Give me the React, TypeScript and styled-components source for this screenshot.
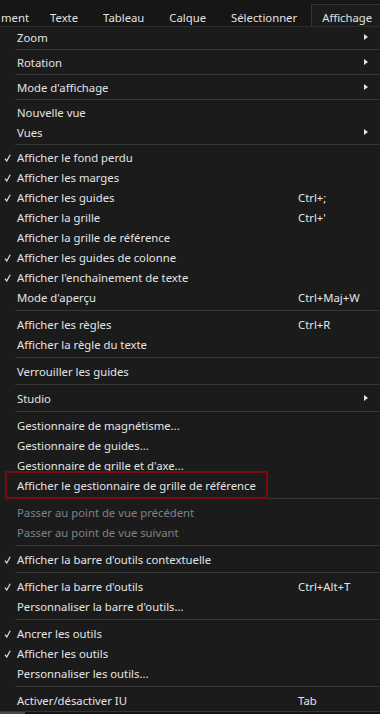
import styled, { createGlobalStyle } from 'styled-components';

type Item =
  | { kind: 'sep'; tight?: boolean }
  | {
      kind?: 'item';
      label: string;
      checked?: boolean;
      shortcut?: string;
      submenu?: boolean;
      disabled?: boolean;
      marked?: boolean;
    };

const tabs = ['ment', 'Texte', 'Tableau', 'Calque', 'Sélectionner', 'Affichage'];

const items: Item[] = [
  { label: 'Zoom', submenu: true },
  { kind: 'sep', tight: true },
  { label: 'Rotation', submenu: true },
  { kind: 'sep', tight: true },
  { label: "Mode d'affichage", submenu: true },
  { kind: 'sep', tight: true },
  { label: 'Nouvelle vue' },
  { label: 'Vues', submenu: true },
  { kind: 'sep', tight: true },
  { label: 'Afficher le fond perdu', checked: true },
  { label: 'Afficher les marges', checked: true },
  { label: 'Afficher les guides', checked: true, shortcut: 'Ctrl+;' },
  { label: 'Afficher la grille', shortcut: "Ctrl+'" },
  { label: 'Afficher la grille de référence' },
  { label: 'Afficher les guides de colonne', checked: true },
  { label: "Afficher l'enchaînement de texte", checked: true },
  { label: "Mode d'aperçu", shortcut: 'Ctrl+Maj+W' },
  { kind: 'sep' },
  { label: 'Afficher les règles', shortcut: 'Ctrl+R' },
  { label: 'Afficher la règle du texte' },
  { kind: 'sep' },
  { label: 'Verrouiller les guides' },
  { kind: 'sep' },
  { label: 'Studio', submenu: true },
  { kind: 'sep' },
  { label: 'Gestionnaire de magnétisme...' },
  { label: 'Gestionnaire de guides...' },
  { label: "Gestionnaire de grille et d'axe..." },
  { label: 'Afficher le gestionnaire de grille de référence', marked: true },
  { kind: 'sep' },
  { label: 'Passer au point de vue précédent', disabled: true },
  { label: 'Passer au point de vue suivant', disabled: true },
  { kind: 'sep' },
  { label: "Afficher la barre d'outils contextuelle", checked: true },
  { kind: 'sep' },
  { label: "Afficher la barre d'outils", checked: true, shortcut: 'Ctrl+Alt+T' },
  { label: "Personnaliser la barre d'outils..." },
  { kind: 'sep' },
  { label: 'Ancrer les outils', checked: true },
  { label: 'Afficher les outils', checked: true },
  { label: 'Personnaliser les outils...' },
  { kind: 'sep' },
  { label: 'Activer/désactiver IU', shortcut: 'Tab' },
];

export default function App() {
  return (
    <>
      <GlobalStyle />
      <Window>
        <TabBar>
          {tabs.map((t, i) => (
            <Tab key={t} active={t === 'Affichage'} first={i === 0}>
              {t}
            </Tab>
          ))}
        </TabBar>
        <Menu>
          {items.map((it, i) =>
            it.kind === 'sep' ? (
              <Separator key={i} tight={it.tight} />
            ) : (
              <Row key={i} disabled={it.disabled} marked={it.marked}>
                <Check>
                  {it.checked && (
                    <svg width="7" height="8" viewBox="0 0 7 8">
                      <path d="M1 4.6 L2.8 7 L6.2 0.8" fill="none" stroke="#d4d4d4" strokeWidth="1.3" />
                    </svg>
                  )}
                </Check>
                <Label>{it.label}</Label>
                <Shortcut>{it.shortcut}</Shortcut>
                <Arrow>{it.submenu && <Triangle />}</Arrow>
              </Row>
            ),
          )}
        </Menu>
        <Footer>
          <FooterTab />
        </Footer>
      </Window>
    </>
  );
}

const GlobalStyle = createGlobalStyle`
  html, body {
    margin: 0;
    padding: 0;
    background: #1c1b1c;
  }
  body {
    font-family: 'Noto Sans', 'Open Sans', sans-serif;
  }
`;

const Window = styled.div`
  width: 380px;
  height: 714px;
  display: flex;
  flex-direction: column;
  overflow: hidden;
  background: #1c1b1c;
`;

const TabBar = styled.div`
  height: 27px;
  flex-shrink: 0;
  display: flex;
  align-items: flex-end;
  background: #161616;
  border-bottom: 1px solid #2c2c2c;
  box-sizing: border-box;
  overflow: hidden;
`;

const Tab = styled.div<{ active?: boolean; first?: boolean }>`
  display: flex;
  align-items: center;
  padding: 3px 12px 0;
  padding-left: ${p => (p.first ? '0' : p.active ? '10px' : '12px')};
  padding-right: ${p => (p.active ? '0' : p.first ? '8px' : '12px')};
  margin-left: ${p => (p.active ? '2px' : '0')};
  flex: ${p => (p.active ? '1' : 'none')};
  box-sizing: border-box;
  font-size: 11.3px;
  color: #e2e2e2;
  white-space: nowrap;
  background: ${p => (p.active ? '#1d1c1d' : 'transparent')};
  border: 1px solid ${p => (p.active ? '#353535' : 'transparent')};
  border-right: none;
  border-bottom: none;
  margin-bottom: ${p => (p.active ? '-1px' : '0')};
  height: ${p => (p.active ? '23px' : '22px')};
`;

const Menu = styled.div`
  display: flex;
  flex-direction: column;
`;

const Row = styled.div<{ disabled?: boolean; marked?: boolean }>`
  position: relative;
  height: 20px;
  display: grid;
  grid-template-columns: 17px 1fr 66px 16px;
  align-items: center;
  font-size: 11.3px;
  color: ${p => (p.disabled ? '#818181' : '#e4e4e4')};
  white-space: nowrap;

  ${p =>
    p.marked &&
    `
    &::after {
      content: '';
      position: absolute;
      left: 5px;
      width: 263px;
      top: -4px;
      bottom: -4px;
      border: 2px solid #780c0c;
      box-sizing: border-box;
    }
  `}
`;

const Check = styled.span`
  display: flex;
  justify-content: flex-end;
  padding-right: 6px;
  padding-top: 1px;
`;

const Label = styled.span``;

const Shortcut = styled.span``;

const Arrow = styled.span`
  display: flex;
  align-items: center;
`;

const Triangle = styled.span`
  width: 0;
  height: 0;
  border-top: 3.5px solid transparent;
  border-bottom: 3.5px solid transparent;
  border-left: 4px solid #e4e4e4;
`;

const Separator = styled.div<{ tight?: boolean }>`
  height: ${p => (p.tight ? '5px' : '7px')};
  display: flex;
  align-items: center;
  padding-left: 15px;

  &::before {
    content: '';
    flex: 1;
    height: 1px;
    background: #373637;
  }
`;

const Footer = styled.div`
  flex: 1;
  border-top: 1px solid #373637;
  margin-top: 1px;
  background: #141414;
  display: flex;
  align-items: flex-end;
`;

const FooterTab = styled.div`
  width: 25px;
  height: 2px;
  background: #4a4a4a;
`;
